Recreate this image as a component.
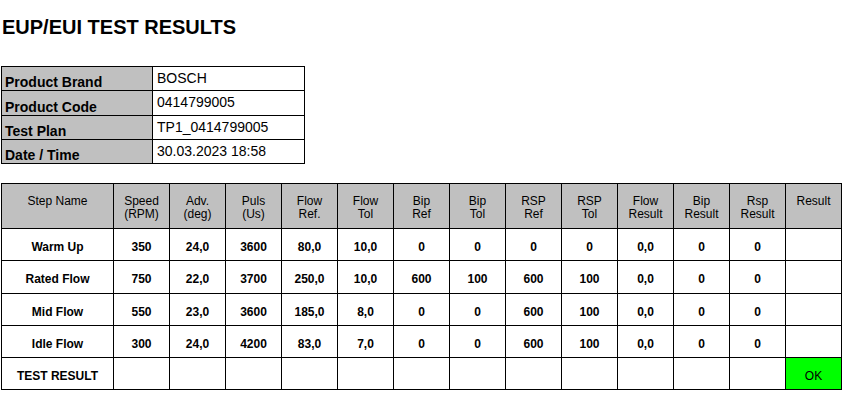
import React from 'react';

const info = [
  { label: 'Product Brand', value: 'BOSCH', h: 'h-[24px]' },
  { label: 'Product Code', value: '0414799005', h: 'h-[25px]' },
  { label: 'Test Plan', value: 'TP1_0414799005', h: 'h-[24px]' },
  { label: 'Date / Time', value: '30.03.2023 18:58', h: 'h-[24px]' },
];

const headers = [
  ['Step Name'],
  ['Speed', '(RPM)'],
  ['Adv.', '(deg)'],
  ['Puls', '(Us)'],
  ['Flow', 'Ref.'],
  ['Flow', 'Tol'],
  ['Bip', 'Ref'],
  ['Bip', 'Tol'],
  ['RSP', 'Ref'],
  ['RSP', 'Tol'],
  ['Flow', 'Result'],
  ['Bip', 'Result'],
  ['Rsp', 'Result'],
  ['Result'],
];

const rows = [
  { h: 'h-[32px]', cells: ['Warm Up', '350', '24,0', '3600', '80,0', '10,0', '0', '0', '0', '0', '0,0', '0', '0', ''] },
  { h: 'h-[33px]', cells: ['Rated Flow', '750', '22,0', '3700', '250,0', '10,0', '600', '100', '600', '100', '0,0', '0', '0', ''] },
  { h: 'h-[32px]', cells: ['Mid Flow', '550', '23,0', '3600', '185,0', '8,0', '0', '0', '600', '100', '0,0', '0', '0', ''] },
  { h: 'h-[32px]', cells: ['Idle Flow', '300', '24,0', '4200', '83,0', '7,0', '0', '0', '600', '100', '0,0', '0', '0', ''] },
];

const style = {
  page: `w-[844px] h-[420px] bg-white text-black pl-[1px] font-['Liberation_Sans',Arial,sans-serif]`,
  title: `ml-[1px] pt-[16px] text-[20px] leading-[23px] font-bold`,
  infoGrid: `mt-[27px] grid grid-cols-[151px_152px] w-[304px] border-l border-t border-black`,
  infoLabel: `flex items-end pl-[3px] bg-[#c0c0c0] border-r border-b border-black text-[14px] leading-[16px] font-bold`,
  infoValue: `pl-[4px] pt-[3px] border-r border-b border-black text-[14px] leading-[16px]`,
  mainGrid: `mt-[19px] grid grid-cols-[112px_repeat(13,56px)] w-[841px] border-l border-t border-black`,
  head: `h-[45px] pt-[11px] bg-[#c0c0c0] border-r border-b border-black text-center text-[12px] leading-[12px] flex flex-col gap-[0.5px]`,
  cell: `pt-[11px] border-r border-b border-black text-center text-[12px] leading-[14px] font-bold`,
};

export default function App() {
  return (
    <div className={style.page}>
      <div className={style.title}>EUP/EUI TEST RESULTS</div>

      <div className={style.infoGrid}>
        {info.map((r) => (
          <React.Fragment key={r.label}>
            <div className={`${style.infoLabel} ${r.h}`}>{r.label}</div>
            <div className={`${style.infoValue} ${r.h}`}>{r.value}</div>
          </React.Fragment>
        ))}
      </div>

      <div className={style.mainGrid}>
        {headers.map((lines, i) => (
          <div key={i} className={style.head}>
            {lines.map((l) => (
              <span key={l}>{l}</span>
            ))}
          </div>
        ))}
        {rows.map((row) =>
          row.cells.map((c, i) => (
            <div key={row.cells[0] + i} className={`${style.cell} ${row.h}`}>
              {c}
            </div>
          ))
        )}
        {headers.map((_, i) => {
          if (i === 0)
            return (
              <div key="tr" className={`${style.cell} h-[32px]`}>
                TEST RESULT
              </div>
            );
          if (i === 13)
            return (
              <div key="ok" className={`${style.cell} h-[32px] bg-[#00ff00] font-normal`}>
                OK
              </div>
            );
          return <div key={'e' + i} className={`${style.cell} h-[32px]`} />;
        })}
      </div>
    </div>
  );
}
